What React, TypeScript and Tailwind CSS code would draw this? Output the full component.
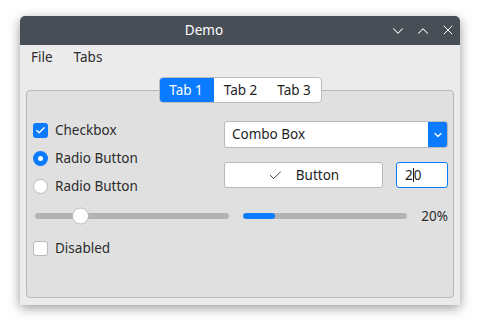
import { Check, ChevronDown, ChevronUp, X } from "lucide-react";

const font = { fontFamily: '"Noto Sans", "DejaVu Sans", sans-serif' };

function CheckRow({ checked, label }: { checked?: boolean; label: string }) {
    return (
        <div className="h-[28px] flex items-center gap-[7px]">
            {checked ? (
                <div className="w-[15px] h-[15px] rounded-[3px] bg-[#0a7aff] flex items-center justify-center">
                    <Check size={11} strokeWidth={3} className="text-white" />
                </div>
            ) : (
                <div className="w-[15px] h-[15px] rounded-[3px] bg-white border border-[#b8b8b8]" />
            )}
            <span className="text-[13.5px] text-[#2c2c2c]">{label}</span>
        </div>
    );
}

function RadioRow({ checked, label }: { checked?: boolean; label: string }) {
    return (
        <div className="h-[28px] flex items-center gap-[7px]">
            {checked ? (
                <div className="w-[15px] h-[15px] rounded-full bg-[#0a7aff] flex items-center justify-center">
                    <div className="w-[5px] h-[5px] rounded-full bg-white" />
                </div>
            ) : (
                <div className="w-[15px] h-[15px] rounded-full bg-white border border-[#b8b8b8]" />
            )}
            <span className="text-[13.5px] text-[#2c2c2c]">{label}</span>
        </div>
    );
}

export default function App() {
    return (
        <div className="w-[480px] h-[329px] bg-white pt-[16px] pl-[20px]" style={font}>
            <div className="w-[440px] h-[289px] flex flex-col rounded-t-[5px] overflow-hidden shadow-[0_3px_12px_rgba(0,0,0,0.4)]">
                {/* Title bar */}
                <div className="h-[29px] bg-[#474e56] flex items-center text-white">
                    <div className="flex-1 text-center text-[13.5px] pl-[3px]">Demo</div>
                    <div className="flex w-[75px]">
                        <div className="w-[25px] flex justify-center"><ChevronDown size={18} strokeWidth={1.4} /></div>
                        <div className="w-[25px] flex justify-center"><ChevronUp size={18} strokeWidth={1.4} /></div>
                        <div className="w-[25px] flex justify-center"><X size={16} strokeWidth={1.5} /></div>
                    </div>
                </div>

                <div className="flex-1 bg-[#ebebeb] flex flex-col">
                    {/* Menu bar */}
                    <div className="h-[25px] flex items-center text-[13.5px] text-[#2c2c2c] pl-[11px] gap-[21px]">
                        <span>File</span>
                        <span>Tabs</span>
                    </div>

                    {/* Tabs */}
                    <div className="mt-[7px] relative z-10 flex justify-center">
                        <div className="flex h-[26px] bg-white border border-[#bcbcbc] rounded-[4px] overflow-hidden text-[13.5px] text-[#1e1e1e]">
                            <div className="w-[55px] bg-[#0a7aff] text-white flex items-center justify-center -my-px -ml-px h-[26px]">Tab 1</div>
                            <div className="w-[54px] flex items-center justify-center">Tab 2</div>
                            <div className="w-[53px] flex items-center justify-center">Tab 3</div>
                        </div>
                    </div>

                    {/* Group box */}
                    <div className="-mt-[13px] mx-[6px] h-[208px] bg-[#e0e0e0] border border-[#b6b6b6] rounded-[4px] pt-[25px] pl-[6px] pr-[5px]">
                        <div className="flex">
                            <div className="flex-1 flex flex-col">
                                <CheckRow checked label="Checkbox" />
                                <RadioRow checked label="Radio Button" />
                                <RadioRow label="Radio Button" />
                            </div>
                            <div className="w-[224px] flex flex-col pt-[5px] gap-[14px]">
                                <div className="h-[27px] flex bg-white border border-[#b8b8b8] rounded-[3px] overflow-hidden">
                                    <div className="flex-1 flex items-center pl-[7px] text-[13.5px] text-[#1e1e1e]">Combo Box</div>
                                    <div className="w-[20px] bg-[#0a7aff] flex items-center justify-center -my-px -mr-px">
                                        <ChevronDown size={12} strokeWidth={2.5} className="text-white" />
                                    </div>
                                </div>
                                <div className="flex gap-[13px]">
                                    <div className="w-[159px] h-[26px] bg-white border border-[#b8b8b8] rounded-[3px] flex items-center justify-center gap-[13px] text-[13.5px] text-[#1e1e1e]">
                                        <Check size={15} strokeWidth={1.5} className="text-[#333]" />
                                        <span>Button</span>
                                    </div>
                                    <div className="w-[52px] h-[26px] bg-white border border-[#0a7aff] rounded-[3px] flex items-center pl-[8px] text-[13.5px] text-[#1e1e1e]">
                                        <span>2</span>
                                        <span className="w-px h-[14px] bg-[#1e1e1e]" />
                                        <span>0</span>
                                    </div>
                                </div>
                            </div>
                        </div>

                        {/* Slider + progress */}
                        <div className="mt-[7px] h-[18px] flex items-center ml-[2px]">
                            <div className="relative w-[194px] h-[6px] rounded-full bg-[#b3b3b3]">
                                <div className="absolute top-1/2 -translate-y-1/2 left-[37px] w-[17px] h-[17px] rounded-full bg-white border border-[#bdbdbd]" />
                            </div>
                            <div className="ml-[14px] w-[164px] h-[6px] rounded-full bg-[#b3b3b3] overflow-hidden">
                                <div className="w-[32px] h-full rounded-full bg-[#0a7aff]" />
                            </div>
                            <div className="flex-1 text-right text-[13.5px] text-[#2c2c2c]">20%</div>
                        </div>

                        <div className="mt-[9px]">
                            <CheckRow label="Disabled" />
                        </div>
                    </div>
                </div>
            </div>
        </div>
    );
}
